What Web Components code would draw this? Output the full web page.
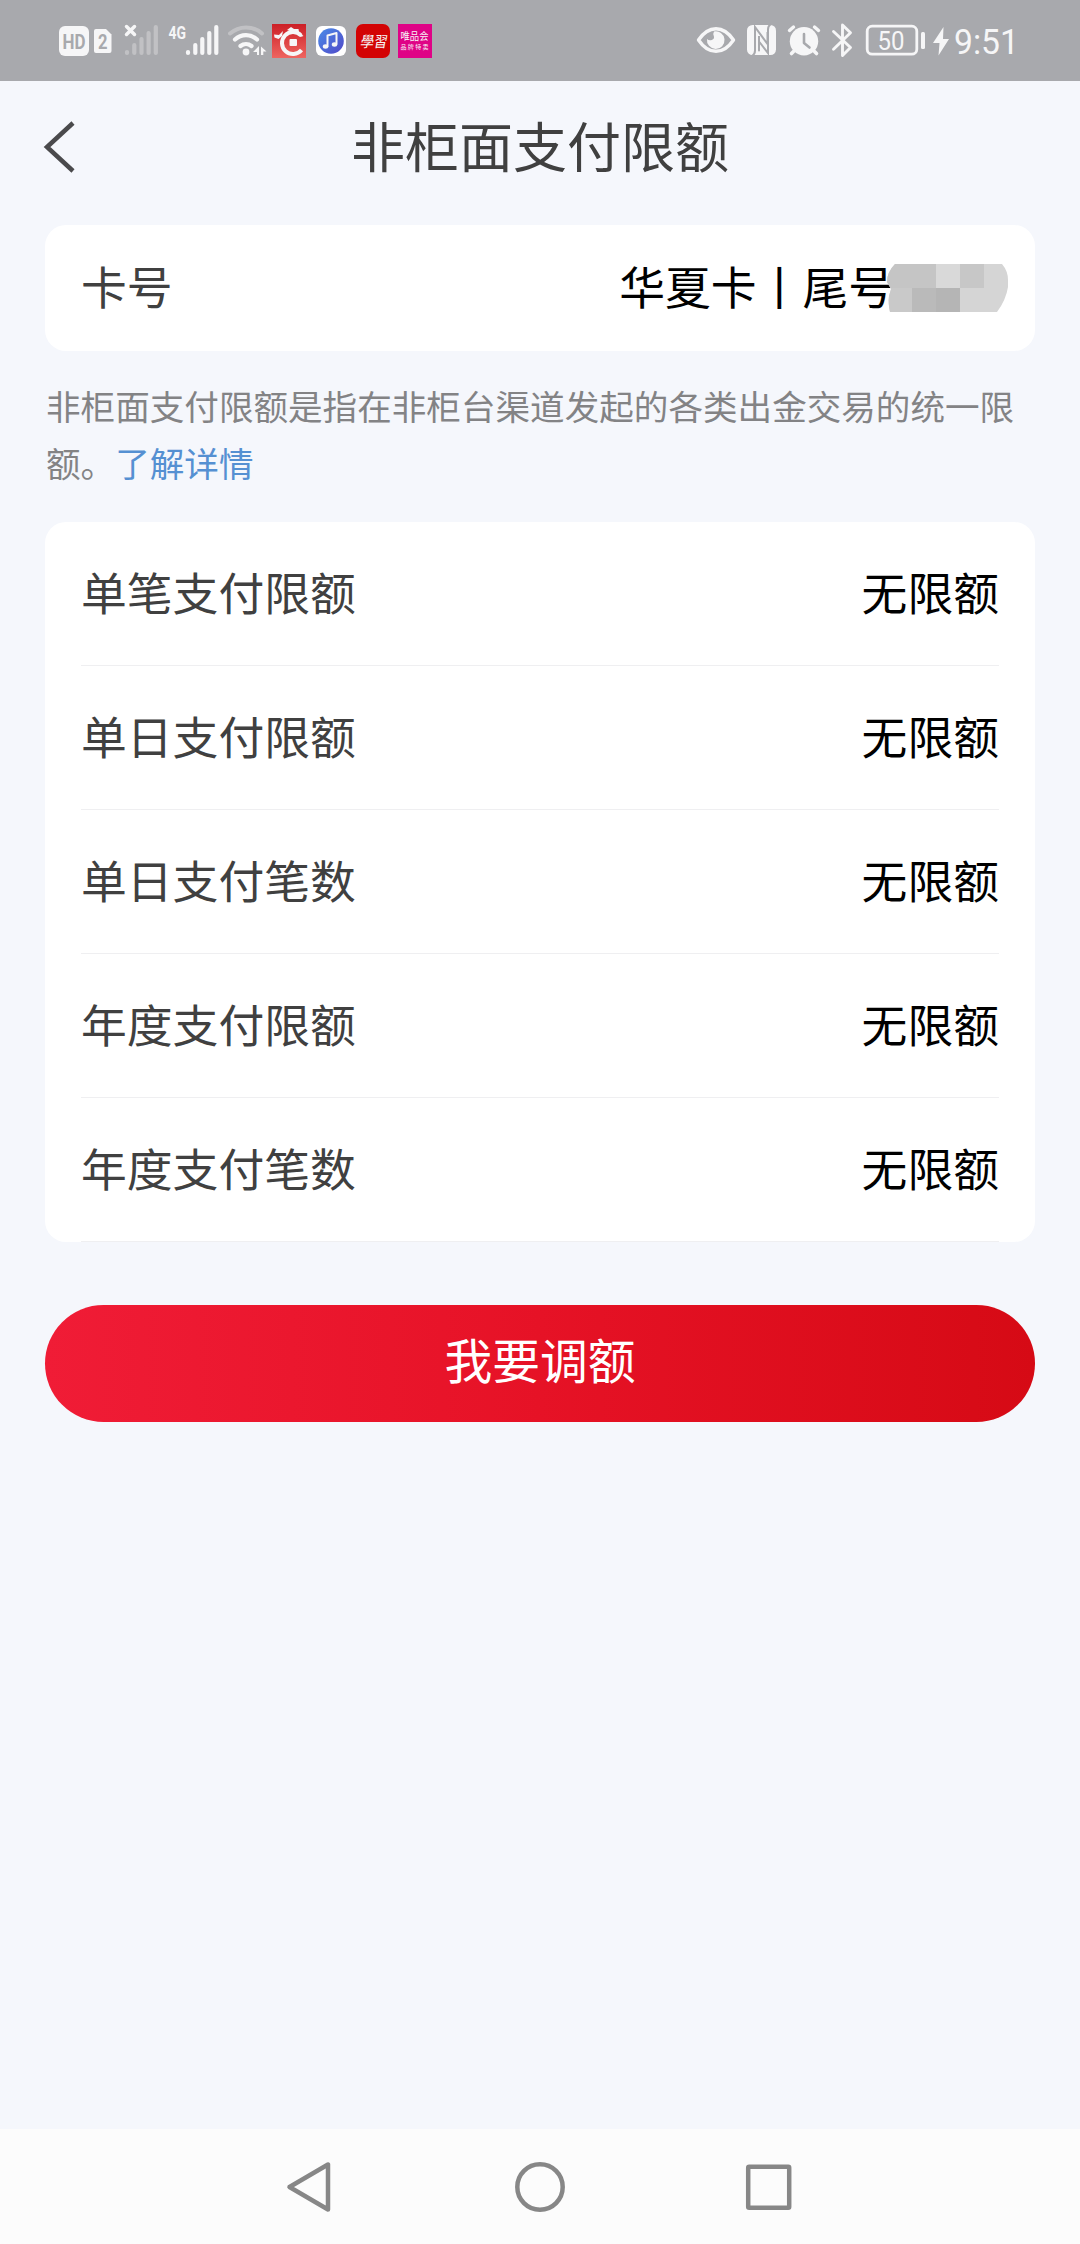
<!DOCTYPE html>
<html lang="zh-CN">
<head>
<meta charset="utf-8">
<title>非柜面支付限额</title>
<style>
  body {
    margin: 0;
    background: #f5f7fc;
    font-family: "Noto Sans CJK SC", sans-serif;
    color: #404040;
  }
</style>
</head>
<body>

<template id="status-bar">
  <style>
    :host {
      display: flex;
      justify-content: space-between;
      height: 81px;
      padding: 0 50px 0 56px;
      background: #a8a9ad;
    }
    div { display: flex; }
    svg { display: block; height: 81px; fill: #f6f6f7; overflow: visible; }
    .line { fill: none; stroke: #f6f6f7; stroke-linecap: round; stroke-linejoin: round; }
    .cut { fill: #a8a9ad; }
    .dim { opacity: .32; }
    text { font-family: Roboto, sans-serif; }
    .cjk { font-family: "Noto Sans CJK SC", sans-serif; }
  </style>
  <div>
    <!-- HD -->
    <svg width="36" viewBox="56 0 36 81">
      <rect x="59" y="26" width="30" height="30" rx="6"/>
      <text class="cut" x="62.500" y="48.500" font-size="20" font-weight="700" textLength="23" lengthAdjust="spacingAndGlyphs">HD</text>
    </svg>
    <!-- sim 2 -->
    <svg width="24" viewBox="92 0 24 81">
      <path d="M96 29h10l5.500 5.500V51a2 2 0 0 1-2 2H96a2 2 0 0 1-2-2V31a2 2 0 0 1 2-2z"/>
      <text class="cut" x="98" y="48.500" font-size="20" font-weight="700" textLength="9.500" lengthAdjust="spacingAndGlyphs">2</text>
    </svg>
    <!-- no signal -->
    <svg width="48" viewBox="116 0 48 81">
      <path class="line" stroke-width="3.500" d="M126.500 26.500l8 8M134.500 26.500l-8 8"/>
      <path class="line dim" stroke-width="4.200" d="M127 52v1M134.300 45v8M141.500 39v14M148.600 33v20M155.800 27v26"/>
    </svg>
    <!-- 4G signal -->
    <svg width="60" viewBox="164 0 60 81">
      <text x="168.500" y="38.500" font-size="18.500" font-weight="700" textLength="17.500" lengthAdjust="spacingAndGlyphs">4G</text>
      <path class="line" stroke-width="4.200" d="M188 52v1M195.300 45v8M202.300 39v14M209.300 33v20M216.300 27v26"/>
    </svg>
    <!-- wifi -->
    <svg width="44" viewBox="224 0 44 81">
      <path class="line dim" stroke-width="4" d="M230 33.500a24 24 0 0 1 32 0"/>
      <path class="line" stroke-width="4.200" d="M235 39.500a16 16 0 0 1 22 0M240.500 46a9 9 0 0 1 11 0"/>
      <circle cx="246" cy="52" r="3.400"/>
      <path d="M259 46v9h-2v-3h-4zM261 46.500l5.500 5-3.200 0 0 3.500h-2.300z"/>
    </svg>
    <!-- bank app -->
    <svg width="44" viewBox="268 0 44 81">
      <defs>
        <linearGradient id="bank" x2="0" y2="1"><stop stop-color="#cc1f26"/><stop offset="1" stop-color="#ee6560"/></linearGradient>
        <linearGradient id="music" x1="0" x2="1" y2="1"><stop stop-color="#4a8ce8"/><stop offset="1" stop-color="#5148c8"/></linearGradient>
      </defs>
      <rect x="272" y="24" width="34" height="34" fill="url(#bank)"/>
      <path class="line" stroke-width="4" style="stroke-linecap: butt" d="M301 35.500a11 11 0 1 0 .5 14.500"/>
      <path d="M274 34.500l5 .5 4-4-1 5-3.500 3-4-1.500zM287 30l4-3 3 2 4.500 0 .5 3 4.500 4-3 1-5-4z"/>
      <rect x="289.500" y="39" width="7.500" height="7" rx="1"/>
    </svg>
    <!-- music app -->
    <svg width="40" viewBox="312 0 40 81">
      <rect x="316" y="26" width="30" height="30" rx="6" fill="#fff"/>
      <circle cx="331" cy="41" r="12.800" fill="url(#music)"/>
      <path class="line" stroke-width="2" d="M327.500 46.500V35.500l9-2.500v11"/>
      <ellipse cx="325.500" cy="46.500" rx="2.700" ry="2.200"/><ellipse cx="334.500" cy="44.500" rx="2.700" ry="2.200"/>
    </svg>
    <!-- study app -->
    <svg width="42" viewBox="352 0 42 81">
      <rect x="356" y="24" width="34" height="34" rx="7" fill="#d30304"/>
      <text class="cjk" x="368" y="47" font-size="15" textLength="27" lengthAdjust="spacingAndGlyphs" transform="skewX(-10)">學習</text>
    </svg>
    <!-- shop app -->
    <svg width="42" viewBox="394 0 42 81">
      <rect x="398" y="24" width="34" height="34" fill="#df0386"/>
      <text class="cjk" x="400.500" y="40" font-size="10" textLength="28" lengthAdjust="spacingAndGlyphs">唯品会</text>
      <text class="cjk" x="400.500" y="48.500" font-size="6" textLength="28">品牌特卖</text>
    </svg>
  </div>
  <div>
    <!-- eye comfort -->
    <svg width="48" viewBox="693 0 48 81">
      <path class="line" stroke-width="3.400" d="M698.500 40Q706 28.700 716 28.700T733.500 40Q726 51.300 716 51.300T698.500 40z"/>
      <path d="M714 31.500a8.800 8.800 0 1 1-7 7.500q2 2 4.800 1 3-1.200 2-4-1-2.500.200-4.500z"/>
    </svg>
    <!-- nfc -->
    <svg width="41" viewBox="741 0 41 81">
      <rect x="747" y="25" width="29" height="30" rx="5.500"/>
      <path class="line" style="stroke: #a8a9ad; stroke-linejoin: miter; stroke-linecap: butt" stroke-width="2" d="M752.500 55.500q2.500-1.500 2.500-5V27l12.500 17V32M770.500 24.500q-2.500 1.500-2.500 5V53l-9-11.500V36"/>
      <path class="line" style="stroke: #a8a9ad" stroke-width="2" d="M759 37v13.500"/>
    </svg>
    <!-- alarm -->
    <svg width="45" viewBox="782 0 45 81">
      <circle cx="804" cy="41.300" r="14.200"/>
      <path class="line" stroke-width="3.400" d="M789.500 30.500l4-3.500M818.500 30.500l-4-3.500"/>
      <path class="line" stroke-width="3.600" d="M793.500 51.500l-2 2M814.500 51.500l2 2"/>
      <path class="line" style="stroke: #a8a9ad" stroke-width="2.600" d="M804 34v9l5.500 4.500"/>
    </svg>
    <!-- bluetooth -->
    <svg width="33" viewBox="827 0 33 81">
      <path class="line" stroke-width="2.900" d="M833.500 31.500l17 16-8 8V25l8 7.800-17 16.500"/>
    </svg>
    <!-- battery -->
    <svg width="70" viewBox="860 0 70 81">
      <rect class="line" x="867.200" y="26.200" width="49.600" height="28" rx="5" stroke-width="2.800"/>
      <rect x="921" y="32" width="4" height="17" rx="1.500"/>
      <text x="877.500" y="49.500" font-size="25.500" textLength="27" lengthAdjust="spacingAndGlyphs">50</text>
    </svg>
    <!-- charging and clock -->
    <svg width="100" viewBox="930 0 100 81">
      <path d="M943.500 27L933 43h6.500l-1 12.500L949 39h-6z"/>
      <text x="954" y="54" font-size="35.500" textLength="65" lengthAdjust="spacingAndGlyphs">9:51</text>
    </svg>
  </div>
</template>

<template id="page-header">
  <style>
    :host {
      display: grid;
      grid-template-columns: 90px 1fr 90px;
      align-items: center;
      height: 132px;
    }
    svg { display: block; margin-left: 42px; }
    h1 {
      margin: 0;
      padding-bottom: 5px;
      text-align: center;
      font-size: 54px;
      line-height: 80px;
      font-weight: 400;
    }
  </style>
  <svg width="36" height="56" viewBox="0 0 36 56" fill="none" stroke="#4a4a4c" stroke-width="4.500">
    <path d="M31 4L5 28 31 52"/>
  </svg>
  <h1><slot></slot></h1>
</template>

<template id="info-card">
  <style>
    :host {
      display: block;
      margin: 0 45px;
      padding: 0 36px;
      border-radius: 21px;
      background: #fff;
    }
  </style>
  <slot></slot>
</template>

<template id="info-row">
  <style>
    :host {
      display: flex;
      justify-content: space-between;
      align-items: center;
      box-sizing: border-box;
      height: 144px;
      padding-bottom: 6px;
      border-bottom: 1px solid #efeff1;
      font-size: 45.800px;
      line-height: 60px;
    }
    :host([plain]) { height: 126px; border: 0; }
    .value { display: flex; align-items: center; color: #000; }
  </style>
  <span><slot name="label"></slot></span>
  <span class="value"><slot></slot></span>
</template>

<!-- pixelated cover over the last digits of the card -->
<template id="digit-mosaic">
  <style>
    :host { position: relative; width: 105px; height: 60px; }
    svg { position: absolute; left: -7px; top: 8px; }
  </style>
  <svg width="122" height="50" viewBox="887 263 122 50">
    <clipPath id="blob">
      <path d="M895 264H1002Q1008 271 1008 280V287Q1006 300 997 312H890Q888 303 889 296L891 289 887 282Q887 272 895 264z"/>
    </clipPath>
    <g clip-path="url(#blob)" shape-rendering="crispEdges">
      <path fill="#d5d5d5" d="M887 264h122v48H887z"/>
      <path fill="#c5c5c5" d="M887 264h49v24h-49z"/>
      <path fill="#d9d9d9" d="M936 264h24v24h-24z"/>
      <path fill="#c7c7c7" d="M960 264h24v24h-24z"/>
      <path fill="#c9c9c9" d="M887 288h25v24h-25z"/>
      <path fill="#bababa" d="M912 288h24v24h-24z"/>
      <path fill="#b5b5b5" d="M936 288h24v24h-24z"/>
    </g>
  </svg>
</template>

<template id="hint-text">
  <style>
    :host {
      display: block;
      margin: 26px 44px 31px 46px;
      font-size: 34.600px;
      line-height: 57px;
      color: #838385;
    }
    ::slotted(a) { color: #5590d2; text-decoration: none; }
  </style>
  <slot></slot>
</template>

<template id="primary-button">
  <style>
    :host { display: block; margin: 63px 45px 0; }
    button {
      display: block;
      width: 100%;
      height: 117px;
      padding: 0 0 10px;
      border: 0;
      border-radius: 59px;
      background: linear-gradient(90deg, #f01c36, #e61226 50%, #d60a15);
      color: #fff;
      font: 400 47.800px/60px "Noto Sans CJK SC", sans-serif;
    }
  </style>
  <button><slot></slot></button>
</template>

<template id="nav-bar">
  <style>
    :host {
      display: flex;
      justify-content: center;
      align-items: center;
      gap: 168px;
      height: 115px;
      background: #fcfcfc;
    }
    svg { display: block; fill: none; stroke: #878787; stroke-width: 4.500; stroke-linejoin: round; }
  </style>
  <svg width="60" height="60" viewBox="0 0 60 60"><path d="M46 7.500V52.500L7.500 30z"/></svg>
  <svg width="60" height="60" viewBox="0 0 60 60"><circle cx="30" cy="30" r="22.700"/></svg>
  <svg width="60" height="60" viewBox="0 0 60 60"><rect x="10.200" y="9.700" width="41" height="41" rx="1"/></svg>
</template>

<template id="limit-page">
  <style>
    :host { display: flex; flex-direction: column; height: 2244px; }
    main { flex: 1; }
    info-card:first-child { margin-top: 12px; }
  </style>
  <status-bar></status-bar>
  <page-header>非柜面支付限额</page-header>
  <main>
    <info-card>
      <info-row plain><span slot="label">卡号</span>华夏卡丨尾号<digit-mosaic></digit-mosaic></info-row>
    </info-card>
    <hint-text>非柜面支付限额是指在非柜台渠道发起的各类出金交易的统一限额。<a href="#">了解详情</a></hint-text>
    <info-card id="limits"></info-card>
    <primary-button>我要调额</primary-button>
  </main>
  <nav-bar></nav-bar>
</template>

<limit-page></limit-page>

<script>
  class TemplateElement extends HTMLElement {
    constructor () {
      super()
      const template = document.getElementById(this.localName)
      this.attachShadow({ mode: 'open' }).appendChild(template.content.cloneNode(true))
    }
  }

  const names = ['status-bar', 'page-header', 'info-card', 'info-row', 'digit-mosaic', 'hint-text', 'primary-button', 'nav-bar']
  names.forEach(name => window.customElements.define(name, class extends TemplateElement {}))

  class LimitPage extends TemplateElement {
    connectedCallback () {
      const limits = this.shadowRoot.getElementById('limits')
      const labels = ['单笔支付限额', '单日支付限额', '单日支付笔数', '年度支付限额', '年度支付笔数']
      labels.forEach(label => {
        const row = document.createElement('info-row')
        row.innerHTML = `<span slot="label">${label}</span>无限额`
        limits.appendChild(row)
      })
    }
  }

  window.customElements.define('limit-page', LimitPage)
</script>
</body>
</html>
